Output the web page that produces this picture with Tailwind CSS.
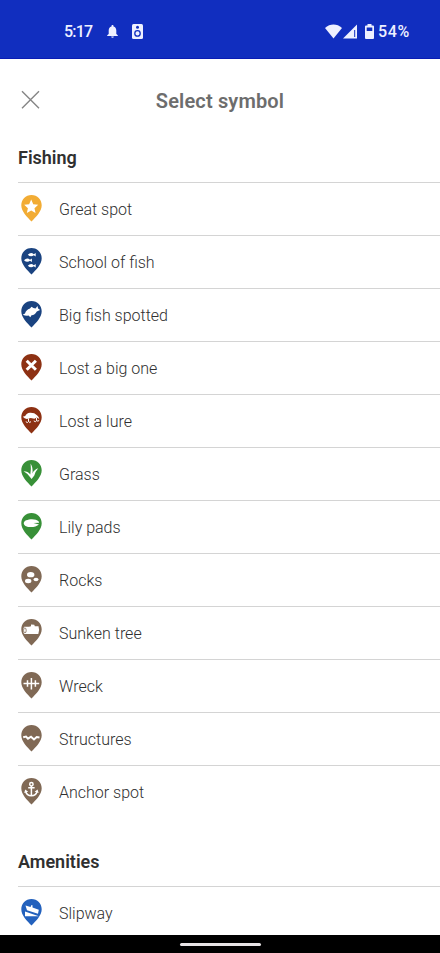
<!DOCTYPE html>
<html lang="en">
<head>
<meta charset="utf-8">
<title>Select symbol</title>
<script src="https://cdn.jsdelivr.net/npm/@tailwindcss/browser@4"></script>
</head>
<body class="bg-white">
<svg class="hidden"><defs><path id="pin" d="M10.5 0C4.6 0 .3 4.700.3 10.300c0 6.200 5.600 11.400 10.200 16.300 4.600-4.900 10.200-10.100 10.200-16.300C20.700 4.700 16.400 0 10.500 0z"/></defs></svg>
<div class="flex h-[953px] w-[440px] flex-col overflow-hidden bg-white font-['Roboto',sans-serif] text-[#303030]">
  <header class="flex h-[59px] shrink-0 items-center border-b border-[#0a1cb4] bg-[#112ebf] pt-1 pr-[29px] pl-[64px] text-base font-medium text-[#eef0ff]">
    <span class="w-[43px] pt-0.5 text-[16px] tracking-[-0.8px]">5:17</span>
    <svg class="h-[13px] w-[11px]" viewBox="0 0 11 13" fill="currentColor"><path d="M5.500 0c.6 0 1 .4 1 1v.5C8.500 2 9.300 3.600 9.300 5.500V9l1.500 1.300v.6H.2v-.6L1.700 9V5.500c0-1.900.8-3.500 2.800-4V1c0-.6.400-1 1-1zM4.200 11.500h2.600a1.300 1.300 0 0 1-2.600 0z"/></svg>
    <svg class="ml-[14px] h-[15px] w-[11px]" viewBox="0 0 11 15"><rect width="11" height="15" rx="1.500" fill="currentColor"/><circle cx="5.500" cy="3.200" r="1.500" fill="#112ebf"/><circle cx="5.500" cy="9.400" r="2.700" fill="none" stroke="#112ebf" stroke-width="1.300"/></svg>
    <div class="ml-auto flex items-center">
      <svg class="h-[15px] w-[17px]" viewBox="0 0 17 15" fill="currentColor"><path d="M8.500 14.500L0 3.900C5-.7 12-.7 17 3.900z"/></svg>
      <svg class="ml-[1px] h-[15px] w-[14px]" viewBox="0 0 14 15"><path d="M14 .5V14.500H0z" fill="currentColor"/><path d="M11.700 6v7" stroke="#112ebf" stroke-width="1"/></svg>
      <svg class="ml-[8px] h-[15px] w-[9px]" viewBox="0 0 9 15"><path d="M2.500 0h4v1.500H8q1 0 1 1V14q0 1-1 1H1q-1 0-1-1V2.500q0-1 1-1h1.500z" fill="currentColor"/><path d="M1.700 3.500h5.600v3.500H1.700z" fill="#112ebf"/></svg>
      <span class="ml-1 w-[33px] pt-0.5 text-[16px] tracking-[0.6px]">54%</span>
    </div>
  </header>
  <main class="flex min-h-0 flex-1 flex-col overflow-hidden">
    <div class="grid h-[82px] shrink-0 grid-cols-[22px_1fr_22px] items-center px-[20px]">
      <svg class="h-[20px] w-[20px]" viewBox="0 0 20 20" fill="none" stroke="#858585" stroke-width="1.400"><path d="M2 1.200L19 18.200M19 1.200L2 18.200"/></svg>
      <h1 class="pt-0.5 text-center text-[20px] font-semibold tracking-[0.15px] text-[#6d6d6d]">Select symbol</h1>
    </div>
    <section class="pl-[18px]">
      <h2 class="h-[41px] pt-[3px] text-[18px] leading-7 font-semibold">Fishing</h2>
      <ul class="text-[16px] font-[350]">
        <li class="flex h-[53px] items-center border-t border-[#d4d4d4] pl-[3px]"><svg class="mb-0.5 h-[27px] w-[21px]" viewBox="0 0 21 27" fill="#fff"><use href="#pin" fill="#f2ac34"/><path d="M10.200 4.600l2.050 4.650 4.950.55-3.700 3.350 1.050 4.950-4.350-2.550-4.350 2.550 1.050-4.950-3.700-3.350 4.950-.55z"/></svg><span class="ml-[17px] pt-0.5">Great spot</span></li>
        <li class="flex h-[53px] items-center border-t border-[#d4d4d4] pl-[3px]"><svg class="mb-0.5 h-[27px] w-[21px]" viewBox="0 0 21 27" fill="#fff"><use href="#pin" fill="#1a4380"/><g id="fish"><path d="M6.800 6.700Q9.800 3.800 12.800 6.200L14.700 4.900V8.600L12.800 7.300Q9.800 9.600 6.800 6.700z"/></g><use href="#fish" x="-3.800" y="5.500"/><use href="#fish" y="11"/></svg><span class="ml-[17px] pt-0.5">School of fish</span></li>
        <li class="flex h-[53px] items-center border-t border-[#d4d4d4] pl-[3px]"><svg class="mb-0.5 h-[27px] w-[21px]" viewBox="0 0 21 27" fill="#fff"><use href="#pin" fill="#1a4380"/><path d="M1.700 13.800L4 12.500Q5 9 9 7.600L10.500 5.700l2 1.300 2 .4L16.500 5l.6 2.600 2 1.300-3.300 1.600Q14 14 10.500 14.300L9.300 16.300l-1.800-1.700Q4.500 15 1.700 13.800z"/></svg><span class="ml-[17px] pt-0.5">Big fish spotted</span></li>
        <li class="flex h-[53px] items-center border-t border-[#d4d4d4] pl-[3px]"><svg class="mb-0.5 h-[27px] w-[21px]" viewBox="0 0 21 27"><use href="#pin" fill="#8d3113"/><path d="M5.700 6.700l9.200 9M14.900 6.700l-9.200 9" stroke="#fff" stroke-width="3"/></svg><span class="ml-[17px] pt-0.5">Lost a big one</span></li>
        <li class="flex h-[53px] items-center border-t border-[#d4d4d4] pl-[3px]"><svg class="mb-0.5 h-[27px] w-[21px]" viewBox="0 0 21 27" fill="#fff"><use href="#pin" fill="#8d3113"/><path d="M1.800 9.800L4.200 9Q5.500 6 9 5.800q4.500-.2 7 2.400 2 1.500 2.300 3.800l-2.500-1.500-2.500 1.300-3.500-.9-4 1.100Q3.500 11.500 1.800 9.800z"/><path d="M7.500 11.500v3q-.7 2-2.700.2M7.500 14.500q1.500 2 2.500 0M15.500 11v2.700q-.7 2-2.700.2M15.500 13.500q1.500 1.500 2.700-.2" fill="none" stroke="#fff" stroke-width="1"/></svg><span class="ml-[17px] pt-0.5">Lost a lure</span></li>
        <li class="flex h-[53px] items-center border-t border-[#d4d4d4] pl-[3px]"><svg class="mb-0.5 h-[27px] w-[21px]" viewBox="0 0 21 27" fill="#fff"><use href="#pin" fill="#389038"/><path d="M9.600 3.500Q12.300 8 11.400 13.400 13.200 9.500 17.200 8.300 14 12 13.300 15.500L10.600 19Q7 13.500 2.600 11.300 6.800 11.200 9.300 14.600 10.300 9 9.600 3.500z"/></svg><span class="ml-[17px] pt-0.5">Grass</span></li>
        <li class="flex h-[53px] items-center border-t border-[#d4d4d4] pl-[3px]"><svg class="mb-0.5 h-[27px] w-[21px]" viewBox="0 0 21 27" fill="#fff"><use href="#pin" fill="#389038"/><path d="M17.500 8.200C15.500 5.800 9 5.500 5.200 7.300 2.200 8.800 2 11.300 4.500 12.900 8.500 15 15 14.200 18 11.500L12.500 10.100 18.200 9.700z"/></svg><span class="ml-[17px] pt-0.5">Lily pads</span></li>
        <li class="flex h-[53px] items-center border-t border-[#d4d4d4] pl-[3px]"><svg class="mb-0.5 h-[27px] w-[21px]" viewBox="0 0 21 27" fill="#fff"><use href="#pin" fill="#806955"/><ellipse cx="9.700" cy="8.700" rx="3.700" ry="2.600"/><ellipse cx="7.200" cy="15" rx="3.200" ry="2.200"/><ellipse cx="15" cy="13.500" rx="2.500" ry="1.700"/></svg><span class="ml-[17px] pt-0.5">Rocks</span></li>
        <li class="flex h-[53px] items-center border-t border-[#d4d4d4] pl-[3px]"><svg class="mb-0.5 h-[27px] w-[21px]" viewBox="0 0 21 27" fill="#fff"><use href="#pin" fill="#806955"/><path d="M3.200 7.800H8l2-.6V5.400l3.300.3.5 1.600H17.500q1.300 3.500-.2 7.700H3.200Q1 11.500 3.200 7.800z"/><ellipse cx="3.900" cy="11.400" rx="1.300" ry="2.500" fill="none" stroke="#806955" stroke-width=".8"/></svg><span class="ml-[17px] pt-0.5">Sunken tree</span></li>
        <li class="flex h-[53px] items-center border-t border-[#d4d4d4] pl-[3px]"><svg class="mb-0.5 h-[27px] w-[21px]" viewBox="0 0 21 27"><use href="#pin" fill="#806955"/><path d="M2.500 11.500H18.200M6.500 8.200v6.600M10.400 6v11.500M14.400 8.200v6.600" stroke="#fff" stroke-width="1.500"/></svg><span class="ml-[17px] pt-0.5">Wreck</span></li>
        <li class="flex h-[53px] items-center border-t border-[#d4d4d4] pl-[3px]"><svg class="mb-0.5 h-[27px] w-[21px]" viewBox="0 0 21 27"><use href="#pin" fill="#806955"/><path d="M2.200 12.200L5 11.500 7 13.700 10 11.700 13 14.500 15.700 12 18.500 12.500" fill="none" stroke="#fff" stroke-width="2"/></svg><span class="ml-[17px] pt-0.5">Structures</span></li>
        <li class="flex h-[53px] items-center border-t border-[#d4d4d4] pl-[3px]"><svg class="mb-0.5 h-[27px] w-[21px]" viewBox="0 0 21 27"><use href="#pin" fill="#806955"/><g fill="none" stroke="#fff" stroke-width="1.500"><circle cx="10.400" cy="6.300" r="1.700"/><path d="M10.400 8v9.500M7.200 9.800h6.400M4.700 13.500q1 4 5.700 4.300 4.700-.3 5.700-4.300"/></g><path d="M3.200 15l1-3.500 3 2.200zM17.600 15l-1-3.500-3 2.200z" fill="#fff"/></svg><span class="ml-[17px] pt-0.5">Anchor spot</span></li>
      </ul>
    </section>
    <section class="pt-[27px] pl-[18px]">
      <h2 class="h-[41px] pt-[3px] text-[18px] leading-7 font-semibold">Amenities</h2>
      <div class="flex h-[53px] items-center border-t border-[#d4d4d4] pl-[3px] text-[16px] font-[350]"><svg class="mb-0.5 h-[27px] w-[21px]" viewBox="0 0 21 27" fill="#fff"><use href="#pin" fill="#2361bd"/><path d="M4.500 6.500l5 1.500 1-2 1 .2v2.300l6.300 2.300-.8 3.900L6 11.300zM4 12.500l13.800 4.700H4z"/></svg><span class="ml-[17px] pt-0.5">Slipway</span></div>
    </section>
  </main>
  <footer class="flex h-[18px] shrink-0 items-center justify-center bg-black pt-px"><div class="h-[3px] w-[81px] rounded-full bg-[#e8e4e6]"></div></footer>
</div>
</body>
</html>
